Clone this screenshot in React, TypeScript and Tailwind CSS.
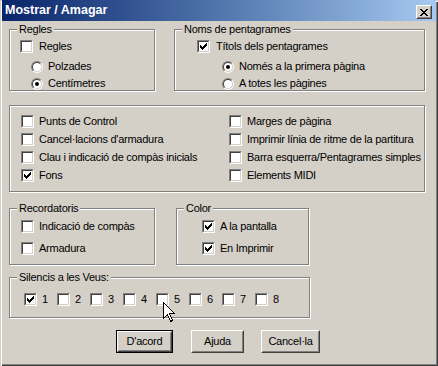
import type { ReactNode } from "react";

const FACE = "#d4d0c8";

function CheckMark() {
  // classic 7x7 tick, 3px tall columns
  const tops = [2, 3, 4, 3, 2, 1, 0];
  return (
    <svg width="7" height="7" className="ml-px mt-px block" shapeRendering="crispEdges">
      {tops.map((t, i) => (
        <rect key={i} x={i} y={t} width="1" height="3" fill="#000" />
      ))}
    </svg>
  );
}

function Check({ checked, label, gap = "gap-[5px]" }: { checked?: boolean; label?: string; gap?: string }) {
  return (
    <div className={`flex items-center ${gap}`}>
      <div className="h-[13px] w-[13px] shrink-0 border border-t-[#808080] border-l-[#808080] border-r-white border-b-white">
        <div className="h-full w-full border border-t-[#404040] border-l-[#404040] border-r-[#d4d0c8] border-b-[#d4d0c8] bg-white">
          {checked ? <CheckMark /> : null}
        </div>
      </div>
      {label ? <span className="whitespace-nowrap leading-[13px]">{label}</span> : null}
    </div>
  );
}

function Radio({ selected, label }: { selected?: boolean; label: string }) {
  return (
    <div className="flex items-center gap-[5px]">
      <div className="h-[12px] w-[12px] shrink-0 rounded-full border border-t-[#808080] border-l-[#808080] border-r-white border-b-white">
        <div className="flex h-full w-full items-center justify-center rounded-full border border-t-[#404040] border-l-[#404040] border-r-[#d4d0c8] border-b-[#d4d0c8] bg-white">
          {selected ? <div className="h-[4px] w-[4px] rounded-full bg-black" /> : null}
        </div>
      </div>
      <span className="whitespace-nowrap leading-[13px]">{label}</span>
    </div>
  );
}

function Group({ label, className, children }: { label?: string; className: string; children: ReactNode }) {
  return (
    <div className={`relative shrink-0 border border-[#808080] shadow-[inset_1px_1px_0_#fff,1px_1px_0_#fff] ${className}`}>
      {label ? (
        <span className="absolute left-[7px] top-[-7px] bg-[#d4d0c8] px-[2px] leading-[13px] whitespace-nowrap">{label}</span>
      ) : null}
      {children}
    </div>
  );
}

function Button({ label, width, isDefault }: { label: string; width: string; isDefault?: boolean }) {
  if (isDefault) {
    return (
      <div className={`h-[23px] ${width} border border-black`}>
        <div className="flex h-full w-full items-center justify-center border border-t-white border-l-white border-r-[#404040] border-b-[#404040]">
          <div className="flex h-full w-full items-center justify-center border border-t-[#d4d0c8] border-l-[#d4d0c8] border-r-[#808080] border-b-[#808080]">
            {label}
          </div>
        </div>
      </div>
    );
  }
  return (
    <div className={`h-[23px] ${width} border border-t-white border-l-white border-r-[#404040] border-b-[#404040]`}>
      <div className="flex h-full w-full items-center justify-center border border-t-[#d4d0c8] border-l-[#d4d0c8] border-r-[#808080] border-b-[#808080]">
        {label}
      </div>
    </div>
  );
}

export default function App() {
  return (
    <div
      className="relative flex h-[366px] w-[438px] flex-col overflow-hidden bg-[#d4d0c8] text-[11px] tracking-[-0.25px] text-black shadow-[inset_1px_1px_0_#d4d0c8,inset_2px_2px_0_#fff,inset_-1px_-1px_0_#404040,inset_-2px_-2px_0_#808080]"
      style={{ fontFamily: '"Liberation Sans", Arial, sans-serif', backgroundColor: FACE }}
    >
      {/* title bar */}
      <div className="mx-[2px] flex h-[21px] shrink-0 items-start justify-between bg-gradient-to-r from-[#0a246a] to-[#a6caf0] pl-[3px] pr-[4px]">
        <span className="mt-[3px] text-[12.5px] font-bold leading-[15px] tracking-normal text-white">Mostrar / Amagar</span>
        <div className="mt-[5px] h-[14px] w-[16px] border border-t-white border-l-white border-r-[#404040] border-b-[#404040] bg-[#d4d0c8]">
          <div className="flex h-full w-full items-center justify-center border border-t-[#d4d0c8] border-l-[#d4d0c8] border-r-[#808080] border-b-[#808080]">
            <svg width="8" height="7" shapeRendering="crispEdges">
              {[0, 1, 2, 3, 4, 5, 6].map((i) => (
                <g key={i}>
                  <rect x={i} y={i} width="2" height="1" fill="#000" />
                  <rect x={6 - i} y={i} width="2" height="1" fill="#000" />
                </g>
              ))}
            </svg>
          </div>
        </div>
      </div>

      <div className="flex flex-col pl-[9px]">
        {/* row 1 */}
        <div className="mt-[8px] flex gap-[19px]">
          <Group label="Regles" className="h-[62px] w-[146px]">
            <div className="flex flex-col pl-[10px] pt-[10px]">
              <Check label="Regles" gap="gap-[6px]" />
              <div className="ml-[11px] mt-[7px]">
                <Radio label="Polzades" />
              </div>
              <div className="ml-[11px] mt-[4px]">
                <Radio label="Centímetres" selected />
              </div>
            </div>
          </Group>
          <Group label="Noms de pentagrames" className="h-[62px] w-[251px]">
            <div className="flex flex-col pl-[22px] pt-[10px]">
              <Check label="Títols dels pentagrames" gap="gap-[6px]" checked />
              <div className="ml-[25px] mt-[7px]">
                <Radio label="Només a la primera pàgina" selected />
              </div>
              <div className="ml-[25px] mt-[4px]">
                <Radio label="A totes les pàgines" />
              </div>
            </div>
          </Group>
        </div>

        {/* row 2 */}
        <div className="mt-[14px]">
          <Group className="h-[87px] w-[416px]">
            <div className="grid grid-cols-[208px_1fr] pl-[11px] pt-[6px]">
              <div className="flex flex-col">
                {[
                  ["Punts de Control", false],
                  ["Cancel·lacions d'armadura", false],
                  ["Clau i indicació de compàs inicials", false],
                  ["Fons", true],
                ].map(([l, c]) => (
                  <div key={l as string} className="flex h-[18px] items-center">
                    <Check label={l as string} checked={c as boolean} />
                  </div>
                ))}
              </div>
              <div className="flex flex-col">
                {["Marges de pàgina", "Imprimir línia de ritme de la partitura", "Barra esquerra/Pentagrames simples", "Elements MIDI"].map(
                  (l) => (
                    <div key={l} className="flex h-[18px] items-center">
                      <Check label={l} />
                    </div>
                  )
                )}
              </div>
            </div>
          </Group>
        </div>

        {/* row 3 */}
        <div className="mt-[16px] flex gap-[21px]">
          <Group label="Recordatoris" className="h-[57px] w-[146px]">
            <div className="flex flex-col gap-[9px] pl-[11px] pt-[11px]">
              <Check label="Indicació de compàs" />
              <Check label="Armadura" />
            </div>
          </Group>
          <Group label="Color" className="h-[57px] w-[133px]">
            <div className="flex flex-col gap-[9px] pl-[25px] pt-[11px]">
              <Check label="A la pantalla" checked />
              <Check label="En Imprimir" checked />
            </div>
          </Group>
        </div>

        {/* row 4 */}
        <div className="mt-[12px]">
          <Group label="Silencis a les Veus:" className="h-[41px] w-[301px]">
            <div className="flex pl-[14px] pt-[15px]">
              {[1, 2, 3, 4, 5, 6, 7, 8].map((n) => (
                <div key={n} className="w-[33px]">
                  <Check label={String(n)} checked={n === 1} />
                </div>
              ))}
            </div>
          </Group>
        </div>

        {/* buttons */}
        <div className="ml-[107px] mt-[12px] flex">
          <Button label="D'acord" width="w-[57px]" isDefault />
          <div className="ml-[18px]">
            <Button label="Ajuda" width="w-[53px]" />
          </div>
          <div className="ml-[17px]">
            <Button label="Cancel·la" width="w-[59px]" />
          </div>
        </div>
      </div>

      {/* mouse pointer */}
      <svg className="absolute left-[163px] top-[302px]" width="13" height="21" shapeRendering="crispEdges">
        <path d="M0.5 0.5 V16.5 L4.5 12.5 L7.5 19.5 L9.5 18.5 L6.5 11.5 H11.5 Z" fill="#fff" stroke="#000" strokeWidth="1" />
      </svg>
    </div>
  );
}
